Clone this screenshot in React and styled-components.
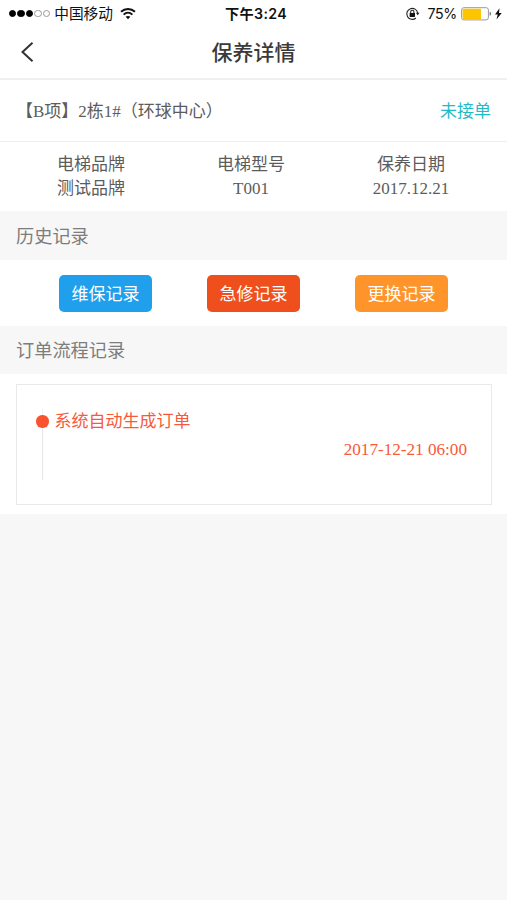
import React from "react";
import styled, { createGlobalStyle } from "styled-components";

const GlobalStyles = createGlobalStyle`
  * {
    box-sizing: border-box;
  }
  body {
    margin: 0;
    min-height: 100vh;
    background-color: #f7f7f7;
    color: #5c5c5c;
    font-family: "Liberation Serif", "Noto Sans CJK SC", serif;
    font-size: 17px;
  }
`;

const StatusBar = styled.div`
  display: grid;
  grid-template-columns: 1fr auto 1fr;
  align-items: center;
  height: 27px;
  padding: 0 4px 0 9px;
  background: #fff;
  color: #111;
  font-family: "Inter", "Noto Sans CJK SC", sans-serif;
  font-size: 14.7px;
  line-height: 27px;
`;

const StatusGroup = styled.div`
  display: flex;
  align-items: center;
  justify-content: ${({ $end }) => ($end ? "flex-end" : "flex-start")};
  height: 27px;

  svg {
    flex: none;
  }
`;

const Signal = styled.div`
  display: flex;
  gap: 1.2px;
  margin-right: 4px;
`;

const SignalDot = styled.i`
  width: 7.3px;
  height: 7.3px;
  border-radius: 50%;
  border: 1px solid ${({ $on }) => ($on ? "#000" : "#999")};
  background: ${({ $on }) => ($on ? "#000" : "#fff")};
`;

const Carrier = styled.span`
  height: 27px;
  margin-right: 7px;
  line-height: 29px;
`;

const Clock = styled.span`
  font-size: 14.2px;
  font-weight: 600;
  letter-spacing: 0.35px;
`;

const Percent = styled.span`
  margin: 0 4px 0 7px;
  font-size: 14.2px;
  letter-spacing: -0.3px;
`;

const NavBar = styled.header`
  display: grid;
  grid-template-columns: 60px 1fr 60px;
  align-items: center;
  height: 53px;
  border-bottom: 2px solid #f0f0f0;
  background: #fff;
`;

const BackButton = styled.button`
  display: flex;
  padding: 0 0 1px 20px;
  border: 0;
  background: none;
`;

const Title = styled.h1`
  margin: 0;
  padding-top: 2px;
  color: #3a3a3a;
  font-size: 21px;
  font-weight: 500;
  line-height: 31px;
  text-align: center;
`;

const OrderRow = styled.div`
  display: flex;
  align-items: center;
  justify-content: space-between;
  height: 62px;
  padding: 0 16px 2px;
  border-bottom: 1px solid #eee;
  background: #fff;
`;

const OrderState = styled.span`
  color: #1fbac4;
`;

const InfoRow = styled.div`
  display: grid;
  grid-template-columns: repeat(3, 1fr);
  height: 69px;
  padding: 11px 16px 0 11px;
  background: #fff;
  text-align: center;
`;

const InfoLine = styled.div`
  height: 24px;
  line-height: 24px;
`;

const SectionTitle = styled.h2`
  height: ${({ $height }) => $height}px;
  margin: 0;
  padding: ${({ $top }) => $top}px 16px 0;
  color: #7d7d7d;
  font-size: 18.2px;
  font-weight: 400;
  line-height: 48px;
`;

const ButtonRow = styled.div`
  display: flex;
  justify-content: center;
  gap: 54.7px;
  height: 66px;
  padding-top: 15px;
  background: #fff;
`;

const RecordButton = styled.button`
  width: 93.3px;
  height: 36.5px;
  padding: 0;
  border: 0;
  border-radius: 5px;
  background: ${({ $color }) => $color};
  color: #fff;
  font: inherit;
  line-height: 39px;
`;

const FlowPanel = styled.section`
  height: 140px;
  padding: 10px 15px 10px 16px;
  background: #fff;
`;

const FlowCard = styled.div`
  display: flex;
  height: 120.5px;
  padding: 23px 24px 23px 19px;
  border: 1px solid #e9e9e9;
  color: #f9593a;
`;

const Track = styled.div`
  display: flex;
  flex-direction: column;
  align-items: center;
  width: 13px;
  height: 72px;
  margin-right: 5.5px;

  &::before {
    content: "";
    width: 1px;
    height: 7px;
    background: #f3f3f3;
  }
  &::after {
    content: "";
    width: 1px;
    flex: 1;
    background: #e6e6e6;
  }
`;

const TrackDot = styled.i`
  width: 12.5px;
  height: 12.5px;
  border-radius: 50%;
  background: #f9522f;
`;

const FlowStep = styled.div`
  flex: 1;
  padding-top: 1px;
  line-height: 25px;
`;

const StepTime = styled.time`
  display: block;
  margin-top: 3px;
  font-size: 17.15px;
  text-align: right;
`;

const infos = [
  ["电梯品牌", "测试品牌"],
  ["电梯型号", "T001"],
  ["保养日期", "2017.12.21"],
];

const records = [
  ["维保记录", "#20a0ec"],
  ["急修记录", "#ee4f1c"],
  ["更换记录", "#ff942b"],
];

const WifiIcon = () => (
  <svg width="16" height="12" viewBox="0 0 16 12" fill="none" stroke="#111" strokeWidth="1.9">
    <path d="M1 3.8C5 0 11 0 15 3.8" />
    <path d="M3.6 6.6c2.6-2.4 6.2-2.4 8.8 0" />
    <path d="M8 11.3 5.6 8.8c1.4-1.2 3.4-1.2 4.8 0z" fill="#111" stroke="none" />
  </svg>
);

const LockIcon = () => (
  <svg width="15" height="14" viewBox="0 0 15 14" fill="none" stroke="#222">
    <path d="M10.9 11A5.5 5.5 0 1 1 12.7 6" strokeWidth="1.1" />
    <path d="M10.9 5.8h3.6L12.7 8.2z" fill="#222" stroke="none" />
    <path d="M5.7 6.3V4.8a1.6 1.6 0 0 1 3.2 0v1.5" strokeWidth="1.1" />
    <rect x="4.6" y="5.9" width="5.4" height="4" rx=".4" fill="#111" stroke="none" />
  </svg>
);

const BatteryIcon = () => (
  <svg width="32" height="14" viewBox="0 0 32 14">
    <rect x=".6" y=".7" width="26.8" height="12.2" rx="2.2" fill="#fff" stroke="#999" />
    <path d="M2.6 1.7H20v10.2H2.6a1 1 0 0 1-1-1V2.7a1 1 0 0 1 1-1z" fill="#fdc500" />
    <path d="M28.6 4.8c2 .5 2 3.5 0 4z" fill="#777" />
  </svg>
);

const BoltIcon = () => (
  <svg width="10" height="12" viewBox="0 0 10 12">
    <path d="M6.5.3 2 6.5h2.7L3.5 11.4 8.7 5H6z" fill="#111" />
  </svg>
);

const App = () => (
  <>
    <GlobalStyles />
    <StatusBar>
      <StatusGroup>
        <Signal>
          {[1, 1, 1, 0, 0].map((on, i) => (
            <SignalDot key={i} $on={on} />
          ))}
        </Signal>
        <Carrier>中国移动</Carrier>
        <WifiIcon />
      </StatusGroup>
      <Clock>下午3:24</Clock>
      <StatusGroup $end>
        <LockIcon />
        <Percent>75%</Percent>
        <BatteryIcon />
        <BoltIcon />
      </StatusGroup>
    </StatusBar>
    <NavBar>
      <BackButton aria-label="返回">
        <svg width="14" height="22" viewBox="0 0 14 22" fill="none" stroke="#333" strokeWidth="2">
          <path d="M12.5 1.8 2.5 11l10 9.2" />
        </svg>
      </BackButton>
      <Title>保养详情</Title>
    </NavBar>
    <OrderRow>
      <span>【B项】2栋1#（环球中心）</span>
      <OrderState>未接单</OrderState>
    </OrderRow>
    <InfoRow>
      {infos.map(([label, value]) => (
        <div key={label}>
          <InfoLine>{label}</InfoLine>
          <InfoLine>{value}</InfoLine>
        </div>
      ))}
    </InfoRow>
    <SectionTitle $height={49} $top={2}>
      历史记录
    </SectionTitle>
    <ButtonRow>
      {records.map(([label, color]) => (
        <RecordButton key={label} $color={color}>
          {label}
        </RecordButton>
      ))}
    </ButtonRow>
    <SectionTitle $height={48} $top={1}>
      订单流程记录
    </SectionTitle>
    <FlowPanel>
      <FlowCard>
        <Track>
          <TrackDot />
        </Track>
        <FlowStep>
          系统自动生成订单
          <StepTime>2017-12-21 06:00</StepTime>
        </FlowStep>
      </FlowCard>
    </FlowPanel>
  </>
);

export default App;
